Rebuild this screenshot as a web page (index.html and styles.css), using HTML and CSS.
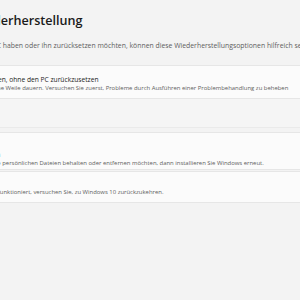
FILE: index.html
```html
<!DOCTYPE html>
<html lang="de">
<head>
  <meta charset="UTF-8" />
  <title>Wiederherstellung</title>
  <link rel="stylesheet" href="styles.css">
</head>
<body>
  <main class="page">
    <h1 class="title"><span class="crumb">System</span><span class="chev">›</span>Wiederherstellung</h1>
    <p class="lead">Wenn Sie Probleme mit Ihrem PC haben oder ihn zurücksetzen möchten, können diese Wiederherstellungsoptionen hilfreich sein.</p>

    <section class="card fix">
      <div class="card-title">Probleme selbst beheben, ohne den PC zurückzusetzen</div>
      <div class="card-desc">Das Zurücksetzen kann eine Weile dauern. Versuchen Sie zuerst, Probleme durch Ausführen einer Problembehandlung zu beheben</div>
    </section>
    <div class="subrow">Problembehandlung</div>

    <section class="card reset">
      <div class="card-title">Diesen PC zurücksetzen</div>
      <div class="card-desc">Wählen Sie aus, ob Sie Ihre persönlichen Dateien behalten oder entfernen möchten, dann installieren Sie Windows erneut.</div>
    </section>
    <section class="card back">
      <div class="card-title">Zurück</div>
      <div class="card-desc">Wenn diese Version nicht funktioniert, versuchen Sie, zu Windows 10 zurückzukehren.</div>
    </section>
  </main>
</body>
</html>
```

FILE: styles.css
```css
html, body {
  margin: 0;
  overflow: hidden;
}

body {
  background: #f3f3f3;
  font-family: "Open Sans", sans-serif;
  color: #1b1b1b;
  width: 300px;
  height: 300px;
}

.page {
  margin-left: -105px;
  width: 520px;
  padding-top: 11px;
}

.title {
  margin: 0;
  font-size: 12.6px;
  font-weight: 600;
  line-height: 20px;
}

.crumb,
.chev {
  color: #5d5d5d;
}

.chev {
  margin: 0 13.5px;
}

.lead {
  margin: 10px 0 14px;
  font-size: 6.86px;
  line-height: 10px;
  color: #5d5d5d;
}

.card {
  background: #fbfbfb;
  border: 1px solid #e6e6e6;
  border-radius: 4px;
  padding: 8.5px 0 5.5px 30.5px;
}

.card.reset {
  padding: 16.5px 0 1.5px 30.5px;
  margin-bottom: 1px;
}

.card.back {
  padding-top: 6.5px;
}

.card-title {
  font-size: 6.66px;
  line-height: 9px;
}

.card-desc {
  font-size: 5.93px;
  line-height: 9px;
  color: #606060;
}

.subrow {
  background: #f5f5f5;
  border: 1px solid #eaeaea;
  border-top: 0;
  height: 28px;
  padding-left: 30.5px;
  font-size: 6.66px;
  line-height: 28px;
  margin-bottom: 4px;
}
```
